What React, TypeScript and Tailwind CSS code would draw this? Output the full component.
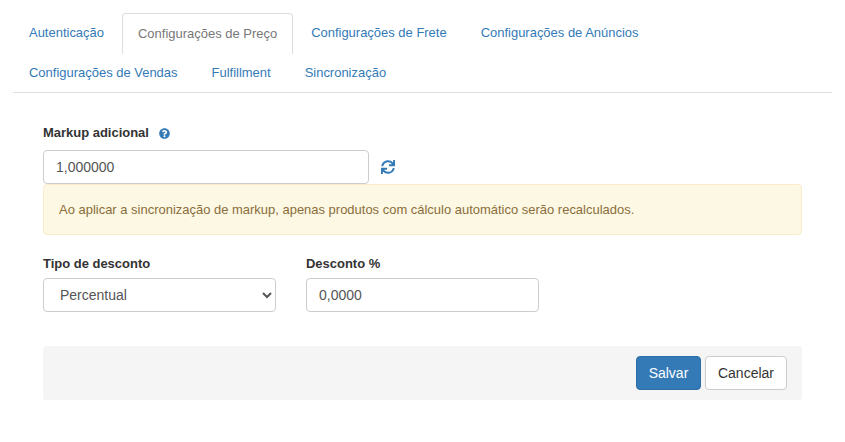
import { FaQuestionCircle, FaSync } from "react-icons/fa";

const tabsRow1 = [
  { label: "Autenticação" },
  { label: "Configurações de Preço", active: true },
  { label: "Configurações de Frete" },
  { label: "Configurações de Anúncios" },
];
const tabsRow2 = ["Configurações de Vendas", "Fulfillment", "Sincronização"];

export default function App() {
  return (
    <div className="w-[845px] h-[442px] bg-white text-[14px] text-[#333] font-['Liberation_Sans',Arial,sans-serif] pt-[13px] overflow-hidden">
      <div className="mx-[13px] w-[819px] border-b border-[#ddd] text-[12.97px]">
        <div className="flex flex-row h-[41px]">
          {tabsRow1.map((t) =>
            t.active ? (
              <a key={t.label} className="block h-[41px] px-[15px] pt-[10px] mr-[2px] text-[#777] bg-white border border-[#ddd] border-b-0 rounded-t-[4px] leading-[20px]">
                {t.label}
              </a>
            ) : (
              <a key={t.label} className="block h-[41px] px-[16px] pt-[10px] mr-[2px] text-[#337ab7] leading-[20px]">
                {t.label}
              </a>
            )
          )}
        </div>
        <div className="flex flex-row h-[38px]">
          {tabsRow2.map((t) => (
            <a key={t} className="block px-[16px] pt-[9px] mr-[2px] text-[#337ab7] leading-[20px]">
              {t}
            </a>
          ))}
        </div>
      </div>

      <div className="mx-[43px] w-[759px] pt-[29px]">
        <label className="flex flex-row items-center h-[20px] font-bold text-[12.97px]">
          <span className="mt-[2px]">Markup adicional</span>
          <FaQuestionCircle className="ml-[10px] mt-[2px] text-[11px] text-[#337ab7]" />
        </label>
        <div className="flex flex-row items-center mt-[8px]">
          <input
            readOnly
            value="1,000000"
            className="w-[326px] h-[34px] px-[12px] border border-[#ccc] rounded-[4px] text-[#555] outline-none"
          />
          <FaSync className="ml-[12px] text-[14px] text-[#337ab7]" />
        </div>
        <div className="h-[51px] px-[15px] flex items-center bg-[#fcf8e3] border border-[#faebcc] rounded-[4px] text-[#8a6d3b] text-[12.97px]">
          Ao aplicar a sincronização de markup, apenas produtos com cálculo automático serão recalculados.
        </div>

        <div className="flex flex-row gap-[30px] mt-[18px]">
          <div className="w-[233px]">
            <label className="block h-[20px] pt-[1px] leading-[20px] font-bold text-[12.97px] mb-[5px]">Tipo de desconto</label>
            <select className="w-full h-[34px] px-[12px] bg-white border border-[#ccc] rounded-[4px] text-[#555] outline-none">
              <option>Percentual</option>
            </select>
          </div>
          <div className="w-[233px]">
            <label className="block h-[20px] pt-[1px] leading-[20px] font-bold text-[12.97px] mb-[5px]">Desconto %</label>
            <input
              readOnly
              value="0,0000"
              className="w-full h-[34px] px-[12px] border border-[#ccc] rounded-[4px] text-[#555] outline-none"
            />
          </div>
        </div>

        <div className="flex flex-row justify-end gap-[4px] h-[54px] mt-[34px] py-[10px] px-[15px] bg-[#f5f5f5] rounded-[3px]">
          <button className="h-[34px] w-[65px] bg-[#337ab7] border border-[#2e6da4] rounded-[4px] text-white">Salvar</button>
          <button className="h-[34px] px-[12px] bg-white border border-[#ccc] rounded-[4px] text-[#333]">Cancelar</button>
        </div>
      </div>
    </div>
  );
}
